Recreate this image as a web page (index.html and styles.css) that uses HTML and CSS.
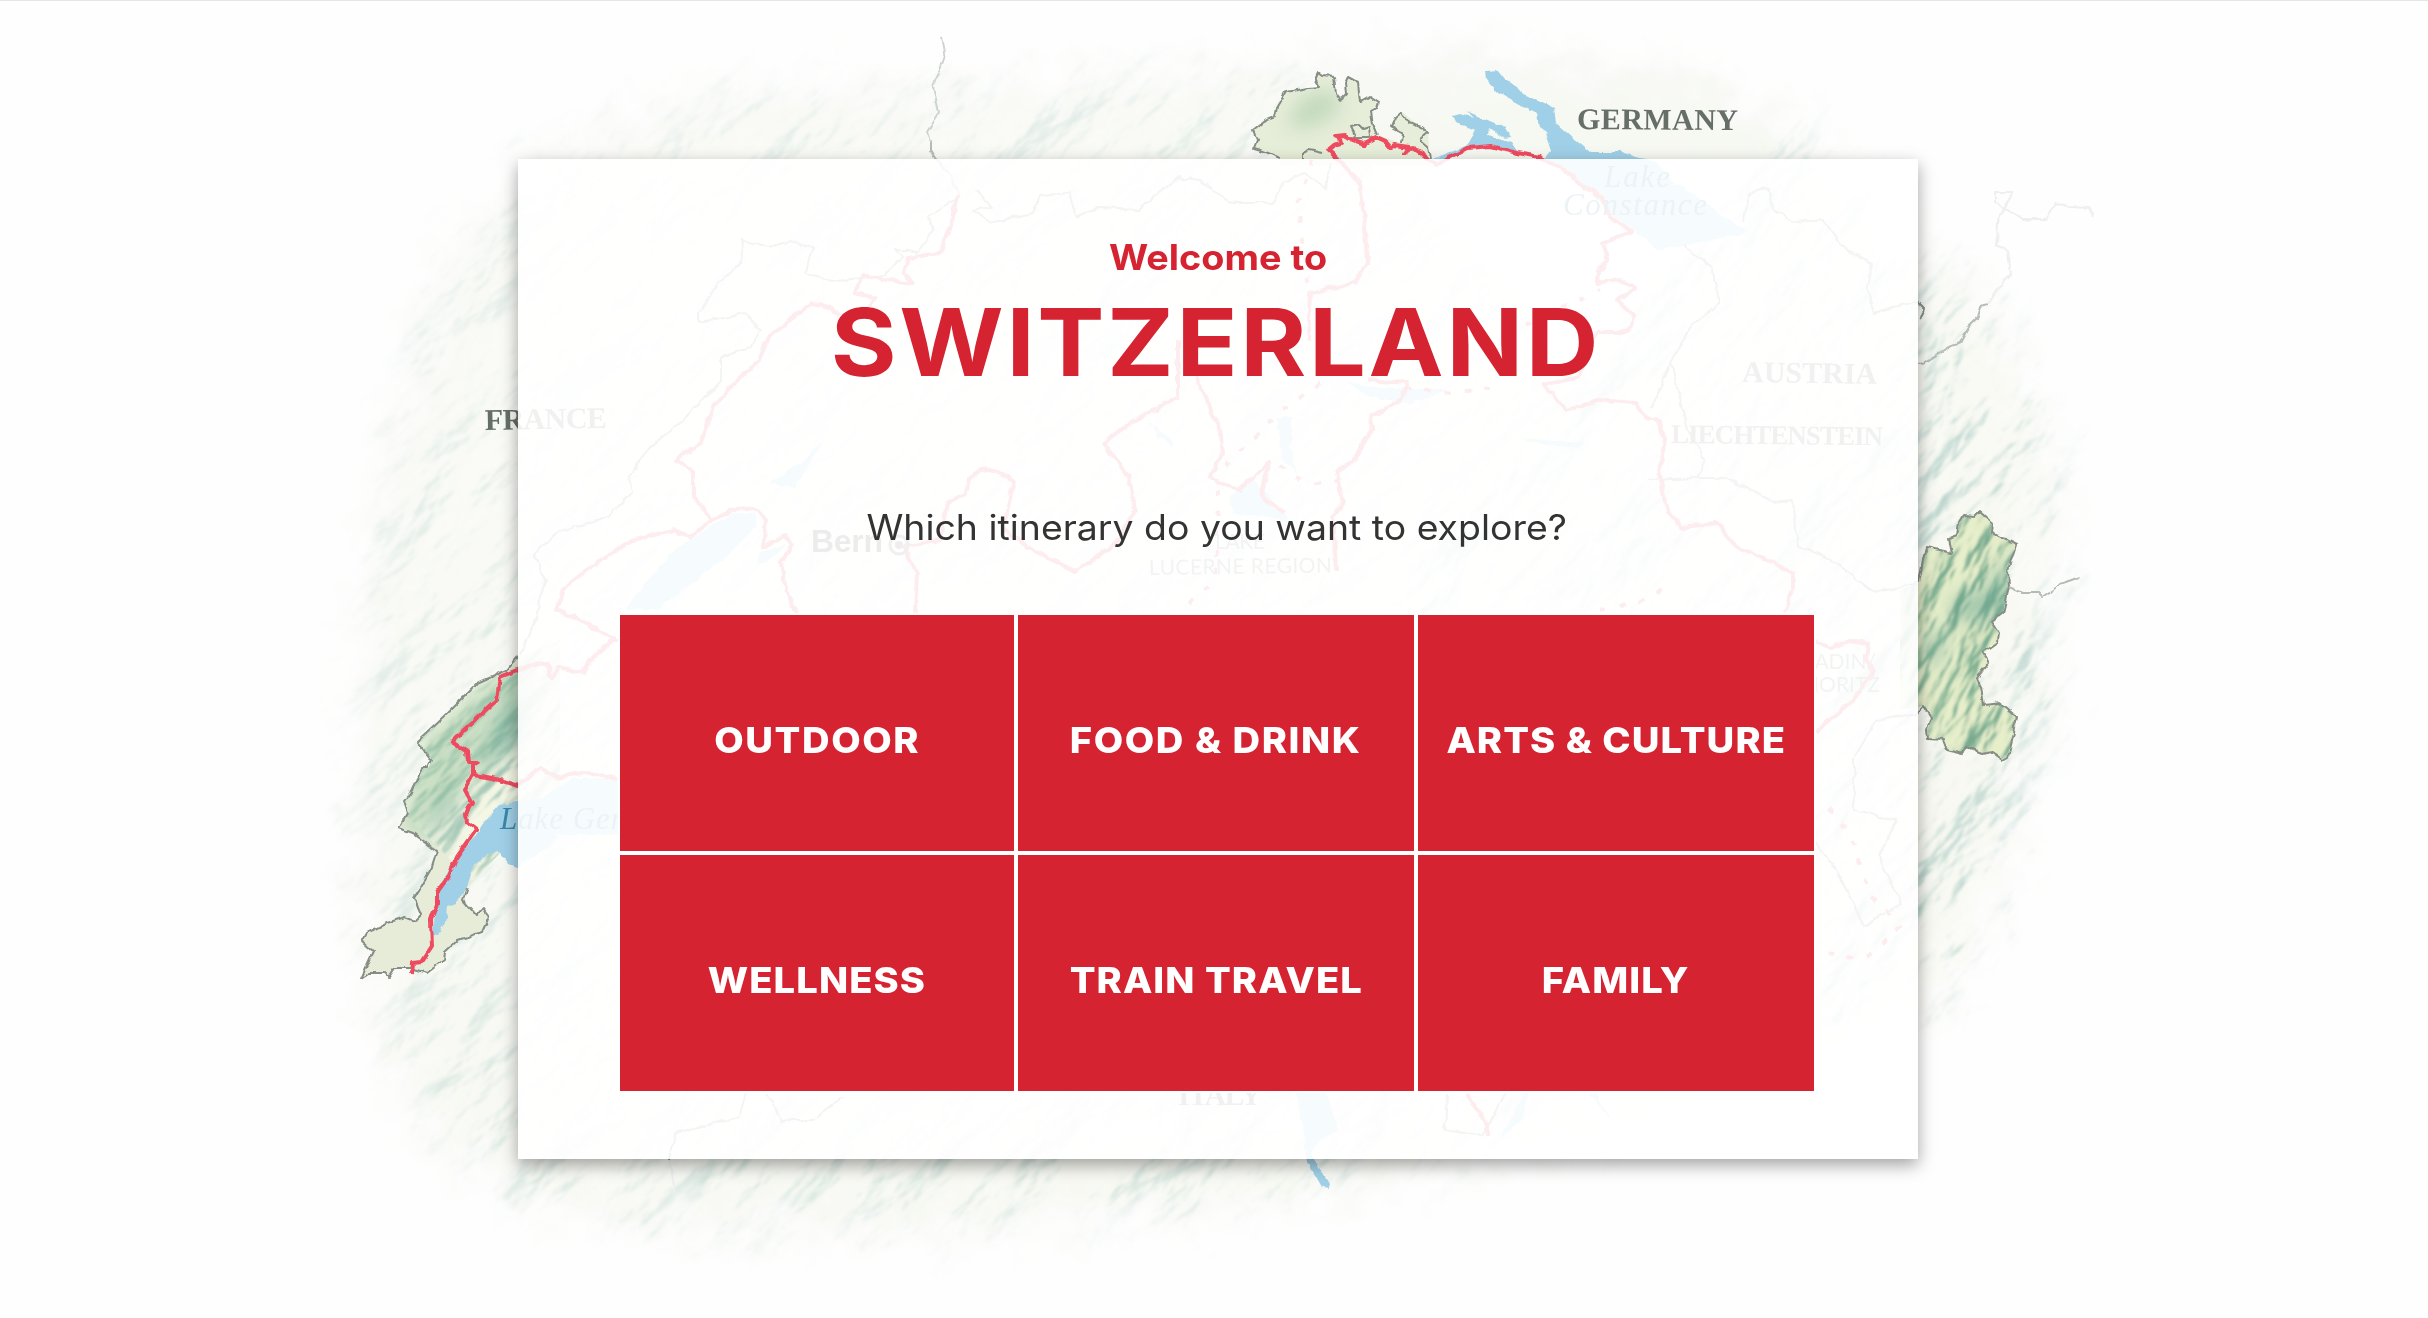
FILE: index.html
```html
<!DOCTYPE html>
<html lang="en">
<head>
<meta charset="utf-8">
<title>Welcome to Switzerland</title>
<link rel="stylesheet" href="styles.css">
</head>
<body>
<main class="stage">
  <svg class="map" viewBox="0 0 2428 1318" aria-hidden="true">
    <defs>
      <filter id="ragged" x="-10%" y="-10%" width="120%" height="120%">
        <feGaussianBlur stdDeviation="24" result="b"/>
        <feTurbulence type="fractalNoise" baseFrequency="0.03" numOctaves="4" seed="4" result="n"/>
        <feDisplacementMap in="b" in2="n" scale="70" xChannelSelector="R" yChannelSelector="G"/>
      </filter>
      <filter id="coast" filterUnits="userSpaceOnUse" x="0" y="0" width="2428" height="1318">
        <feTurbulence type="fractalNoise" baseFrequency="0.09" numOctaves="2" seed="7" result="n"/>
        <feDisplacementMap in="SourceGraphic" in2="n" scale="6" xChannelSelector="R" yChannelSelector="G"/>
      </filter>
      <filter id="relief" x="0" y="0" width="100%" height="100%" color-interpolation-filters="sRGB">
        <feTurbulence type="fractalNoise" baseFrequency="0.007 0.016" numOctaves="5" seed="11"/>
        <feDiffuseLighting surfaceScale="20" diffuseConstant="1.1" lighting-color="#fff">
          <feDistantLight azimuth="250" elevation="55"/>
        </feDiffuseLighting>
        <feComponentTransfer>
          <feFuncR type="table" tableValues=".6 .64 .72 .84 .95 .98"/>
          <feFuncG type="table" tableValues=".74 .78 .83 .9 .965 .98"/>
          <feFuncB type="table" tableValues=".7 .75 .8 .87 .93 .95"/>
        </feComponentTransfer>
        <feGaussianBlur stdDeviation="1.2"/>
      </filter>
      <filter id="crags" x="0" y="0" width="100%" height="100%" color-interpolation-filters="sRGB">
        <feTurbulence type="fractalNoise" baseFrequency="0.012 0.04" numOctaves="4" seed="23"/>
        <feDiffuseLighting surfaceScale="14" diffuseConstant="1.1" lighting-color="#fff">
          <feDistantLight azimuth="250" elevation="50"/>
        </feDiffuseLighting>
        <feComponentTransfer>
          <feFuncR type="table" tableValues=".5 .55 .62 .78 .93 1"/>
          <feFuncG type="table" tableValues=".7 .74 .78 .87 .95 1"/>
          <feFuncB type="table" tableValues=".64 .68 .72 .8 .88 .94"/>
        </feComponentTransfer>
        <feGaussianBlur stdDeviation=".8"/>
      </filter>
      <linearGradient id="fade" x1="0" y1="0" x2="1" y2="1">
        <stop offset="0" stop-color="#fff" stop-opacity=".45"/>
        <stop offset=".35" stop-color="#fff" stop-opacity=".6"/>
        <stop offset="1" stop-color="#fff"/>
      </linearGradient>
      <mask id="land" maskUnits="userSpaceOnUse" x="0" y="0" width="2428" height="1318">
        <path filter="url(#ragged)" fill="url(#fade)" d="M560 150 720 95 960 95 1250 75 1500 60 1680 80 1780 125 1890 240 1990 310 2040 440 2045 700 2000 850 1940 990 1830 1045 1600 1120 1380 1170 1200 1200 960 1220 700 1220 530 1200 435 1130 385 1030 365 900 368 640 395 450 440 270Z"/>
      </mask>
      <clipPath id="cantons">
        <path d="M518 657 507 670 478 683 443 718 417 742 432 760 428 768 422 768 410 793 403 802 407 813 399 828 413 833 437 851 432 867 419 890 414 898 421 915 415 921 405 917 387 923 367 933 362 942 373 952 368 963 361 979 370 973 385 973 389 977 395 968 410 968 427 973 444 960 445 952 458 940 482 932 489 917 483 909 477 916 463 900 467 888 500 853 560 830V640Z"/>
        <path d="M1919 583 1923 560 1926 547 1952 553 1949 538 1957 535 1959 522 1963 515 1975 516 1980 511 1993 523 1992 533 2016 545 2008 570 2009 587 2003 613 1992 622 1999 633 1998 642 1983 653 1989 663 1977 678 1981 687 1984 705 2000 703 2017 717 2013 737 2008 757 2003 760 1992 752 1983 754 1967 748 1962 754 1947 750 1943 740 1928 739 1927 730 1931 718 1923 706 1900 710V590Z"/>
        <path d="M1280 158 1261 150 1254 148 1257 140 1253 130 1263 122 1275 117 1277 107 1286 92 1309 88 1319 87 1315 80 1318 73 1334 77 1336 93 1341 100 1346 95 1348 77 1359 83 1361 102 1370 96 1379 102 1370 112 1377 135 1401 143 1402 133 1391 127 1402 112 1420 127 1428 133 1430 165 1280 165Z"/>
      </clipPath>
      <filter id="soft"><feGaussianBlur stdDeviation="9"/></filter>
    </defs>

    <g mask="url(#land)">
      <rect width="2428" height="1318" fill="#f1f4ea"/>
      <g opacity=".5"><rect x="-700" y="0" width="2300" height="1500" transform="rotate(-42 800 700)" filter="url(#relief)"/></g>
      <g opacity=".8"><rect x="1600" y="150" width="900" height="1000" transform="rotate(-48 1990 640)" filter="url(#relief)"/></g>
    </g>
    <g clip-path="url(#cantons)">
      <rect x="340" y="600" width="240" height="400" fill="#e6ecd8"/>
      <rect x="1240" y="60" width="200" height="110" fill="#e6edd8"/>
      <rect x="1880" y="500" width="150" height="280" fill="#e6eed8"/>
      <g opacity=".6"><rect x="340" y="500" width="240" height="340" transform="rotate(-45 460 700)" filter="url(#crags)"/></g>
      <g class="blend" opacity=".95"><rect x="1780" y="440" width="380" height="360" transform="rotate(-62 1970 640)" filter="url(#crags)"/></g>
      <g filter="url(#soft)">
        <path class="wood" d="M400 820 425 735 480 685 530 655 530 720 500 760 445 810 420 840Z"/>
        <path class="wood wood-dark" d="M520 680 525 740 480 770 490 740Z"/>
        <path class="wood wood-dark" d="M425 845 440 800 460 780 450 815Z"/>
        <path class="wood" d="M1285 125 1305 95 1335 90 1340 112 1310 128Z"/>
        <path class="wood wood-dark" d="M1950 600 1985 590 2010 550 2008 610 1960 625Z"/>
        <path class="wood wood-dark" d="M1920 650 1945 620 1940 670Z"/>
      </g>
    </g>

    <g filter="url(#coast)">
      <g class="lake">
        <path d="M518 802 500 805 482 825 475 837 453 863 437 892 433 935 438 936 445 923 447 907 455 905 467 887 473 868 487 854 500 853 507 863 517 867 547 848 557 835 620 835V778H573L543 797Z"/>
        <path d="M1486 70 1497 69 1506 80 1518 87 1523 95 1537 100 1554 108 1556 123 1573 138 1590 152 1621 152 1640 158 1655 160 1667 177 1701 200 1747 232 1720 238 1659 250 1636 232 1611 215 1583 183 1544 160 1552 150 1546 132 1539 127 1537 113 1518 103 1498 92 1487 80Z"/>
        <path d="M1453 115 1460 113 1475 118 1468 111 1483 118 1506 128 1512 137 1504 138 1489 128 1488 135 1512 142 1518 151 1491 145 1468 148 1449 160 1430 160 1468 145 1475 130 1456 122Z"/>
        <path d="M732 513H754L757 527 723 560 656 610H625L656 570 678 547Z"/>
        <path d="M824 440 795 487 768 485 803 460Z"/>
        <path d="M786 545 770 560 757 566 760 552Z"/>
        <path d="M1277 417H1293L1290 447 1298 473 1282 457Z"/>
        <path d="M1346 380 1368 387 1451 390 1411 403 1370 397Z"/>
        <path d="M1518 437 1582 442V448L1545 445Z"/>
        <path d="M1150 422 1172 440 1174 447 1158 436Z"/>
        <path d="M1228 497 1253 477 1277 507 1290 520 1234 513Z"/>
        <path d="M1297 1093H1326L1338 1130 1316 1142 1311 1154 1328 1183 1329 1188 1322 1187 1307 1161Z"/>
        <path d="M1524 1094H1530L1520 1122 1500 1138ZM1588 1093 1595 1095 1613 1120Z"/>
      </g>
      <g class="border">
        <path d="M518 657 507 670 478 683 443 718 417 742 432 760 428 768 422 768 410 793 403 802 407 813 399 828 413 833 437 851 432 867 419 890 414 898 421 915 415 921 405 917 387 923 367 933 362 942 373 952 368 963 361 979 370 973 385 973 389 977 395 968 410 968 427 973 444 960 445 952 458 940 482 932 489 917 483 909 477 916 463 900 467 888"/>
        <path d="M1919 583 1923 560 1926 547 1952 553 1949 538 1957 535 1959 522 1963 515 1975 516 1980 511 1993 523 1992 533 2016 545 2008 570 2009 587 2003 613 1992 622 1999 633 1998 642 1983 653 1989 663 1977 678 1981 687 1984 705 2000 703 2017 717 2013 737 2008 757 2003 760 1992 752 1983 754 1967 748 1962 754 1947 750 1943 740 1928 739 1927 730 1931 718 1923 706 1917 712"/>
        <path d="M1280 158 1261 150 1254 148 1257 140 1253 130 1263 122 1275 117 1277 107 1286 92 1309 88 1319 87 1315 80 1318 73 1322 76 1334 77 1336 93 1341 100 1346 95 1345 83 1348 77 1359 83 1361 102 1370 96 1379 102 1377 108 1370 112 1372 123 1377 135"/>
        <path d="M1351 127 1355 135 1351 138 1370 138 1369 127 1363 129 1359 125ZM1401 143 1402 133 1391 127 1395 118 1402 112 1409 122 1420 127 1428 133 1420 140 1428 147 1430 158M1303 160V153L1309 150 1322 153"/>
        <path d="M955 200 929 217 933 230 917 253 895 248 904 257 884 275 830 282 806 272 812 247 788 242 768 247 743 240 741 263 719 283 699 313V322L745 313 761 330 750 348 721 357V380L683 420 645 453 629 477 632 493 607 517 556 533 534 555 545 580 536 617 520 655"/>
        <path d="M975 190 991 207 973 210 991 223 1033 213 1040 195 1069 193 1076 217 1098 208 1138 210 1178 177 1200 180 1213 190 1231 203 1273 203 1282 185 1303 173 1326 188 1330 163"/>
        <path d="M1683 245 1712 267 1719 303 1690 327 1671 363 1652 407M1671 363 1688 430 1705 460 1697 478 1647 480M1697 478 1726 478 1774 502 1793 500 1798 547 1827 557 1874 593 1918 583M1743 222 1750 193 1769 188 1774 210 1793 222 1824 220 1846 250 1872 263 1867 287 1874 313 1918 302 1925 309 1920 318"/>
        <path d="M1917 713 1876 721 1854 758V810L1896 821 1879 857 1902 904 1864 926 1840 877 1816 841M746 1093 739 1117 675 1133 670 1160M767 1093 782 1120 813 1120 843 1097M1447 1093 1445 1130 1483 1136 1505 1094"/>
      </g>
      <g class="border border-thin">
        <path d="M930 140V150L935 158 951 177 959 195M2009 587 2023 593 2038 593 2042 597 2060 585 2080 578M1918 362 1923 364 1950 347 1960 343 1968 328 1978 318 1981 307 1987 305"/>
      </g>
      <g class="border border-faint">
        <path d="M942 37 945 53 933 87 939 113 927 133 930 142"/>
        <path class="ghost" d="M1987 305 1997 290 2011 275 2008 252 1997 245 1998 222 2004 208 1995 202V193H2013L2004 208 2023 220H2047L2055 202 2070 207 2089 208 2093 217M670 1160 675 1193"/>
      </g>
      <g class="route">
        <path d="M518 670 500 677 497 700 467 727 452 742 467 752 468 762 478 762 473 765V775L465 790 472 803 466 813 467 823 476 830 457 857 448 878 437 892V903L431 920 432 947 422 962 413 963 412 973"/>
        <path d="M473 775 493 778 518 786 540 768 557 777 590 772 617 779"/>
        <path d="M518 670 538 663 548 665 552 678 560 667 583 673 590 660 613 640 616 640 578 618 556 610 565 587 596 563 629 542 672 530 690 537 712 520"/>
        <path d="M1339 160 1328 150 1334 145 1342 143 1341 138 1336 136 1345 135 1353 140 1365 144 1376 138 1387 143 1391 148 1395 145 1409 147 1405 153 1412 147 1422 153 1426 159 1437 164 1451 157 1468 148 1491 146 1518 153 1539 157 1564 170 1583 185 1602 198 1609 217 1632 232 1602 243 1608 260 1598 270 1597 283 1621 280 1636 288 1616 300 1635 317 1628 332 1597 332 1578 377 1544 385 1566 410 1597 400 1635 403 1645 418 1659 420 1665 440 1659 470 1666 507 1681 527 1717 523 1736 547 1764 558 1793 573V587L1784 612"/>
        <path d="M1339 160 1360 183 1365 227 1367 263 1355 283 1310 293 1308 340M1816 641 1830 648 1849 641 1868 644 1866 659 1873 673 1854 699 1816 732M1467 1094 1488 1126V1136"/>
        <path d="M1368 380 1408 383 1400 400 1370 417 1373 427 1354 460 1336 473 1344 503 1333 517 1336 570"/>
        <path d="M1178 340V397L1132 422 1103 443 1129 477 1135 510 1116 543 1076 572 1030 548 1003 530 1014 480 985 468 969 480 966 493 947 503 940 540 904 547 917 573 915 613"/>
        <path d="M1194 373 1220 430 1223 453 1210 477 1239 490 1269 463 1261 497 1285 513"/>
        <path d="M958 195 953 217 940 253 908 258 904 273 913 283 888 280 862 275 855 293 875 298 870 307M839 317 830 307 812 303 768 337 759 360 737 380 714 407 701 443 676 460 694 473V497L712 520 732 510 754 507 766 520 763 547 786 535 792 545 781 563 786 590 797 613"/>
        <path class="dotted" d="M1320 383 1279 413 1258 435 1220 472M1313 160 1297 205 1303 240 1309 290M1405 388 1451 393 1490 388M1280 465 1305 483 1340 480M1829 808 1850 833 1859 861 1869 893 1891 916 1900 926 1879 948 1864 958 1816 952M1600 610 1640 602 1670 585M1525 325 1600 290M1218 490 1216 580 1180 612"/>
      </g>
    </g>

    <g class="country">
      <text x="1577" y="129" textLength="161" transform="rotate(.4 1577 129)">GERMANY</text>
      <text x="485" y="430" textLength="122" transform="rotate(-1 485 430)">FRANCE</text>
      <text x="1742" y="382" textLength="135" transform="rotate(.8 1742 382)">AUSTRIA</text>
      <text class="country-small" x="1671" y="443" textLength="212" transform="rotate(.6 1671 443)">LIECHTENSTEIN</text>
      <text x="1178" y="1105" textLength="84">ITALY</text>
    </g>
    <g class="water-name">
      <text x="500" y="829" textLength="172">Lake Geneva</text>
      <text x="1604" y="187" textLength="66">Lake</text>
      <text x="1563" y="215" textLength="144">Constance</text>
    </g>
    <g class="region">
      <text x="1215" y="549" textLength="50">LAKE</text>
      <text x="1149" y="575" textLength="183" transform="rotate(-.8 1149 575)">LUCERNE REGION</text>
      <text x="1876" y="669" text-anchor="end">ENGADIN/</text>
      <text x="1880" y="692" text-anchor="end">ST. MORITZ</text>
    </g>
    <text class="capital" x="811" y="552" textLength="72">Bern</text>
    <circle class="capital-mark" cx="899" cy="545" r="9"/>
    <circle cx="899" cy="545" r="4" fill="#555"/>
  </svg>

  <section class="card">
    <p class="welcome">Welcome to</p>
    <h1 class="title">SWITZERLAND</h1>
    <p class="question">Which itinerary do you want to explore?</p>
    <nav class="tiles">
      <a class="tile"><span class="label label-loose">OUTDOOR</span></a>
      <a class="tile"><span class="label label-loose">FOOD &amp; DRINK</span></a>
      <a class="tile"><span class="label">ARTS &amp; CULTURE</span></a>
      <a class="tile"><span class="label">WELLNESS</span></a>
      <a class="tile"><span class="label">TRAIN TRAVEL</span></a>
      <a class="tile"><span class="label">FAMILY</span></a>
    </nav>
  </section>
</main>
</body>
</html>
```
FILE: styles.css
```css
* { box-sizing: border-box; }

body {
  margin: 0;
  background: #fefefe;
  font-family: Inter, "Liberation Sans", sans-serif;
  color: #333;
}

.stage {
  position: relative;
  display: flex;
  justify-content: center;
  align-items: flex-start;
  width: 2428px;
  height: 1318px;
  padding: 158px 0 0 8px;
  border-top: 1px solid #e6e6e6;
  overflow: hidden;
}

.map {
  position: absolute;
  left: 0;
  top: -1px;
  width: 2428px;
  height: 1318px;
}

.blend { mix-blend-mode: multiply; }
.wood { fill: #8fbf98; opacity: .4; }
.wood-dark { fill: #5f9f90; opacity: .5; }
.lake { fill: #a0d0e7; }
.border { fill: none; stroke: #858d85; stroke-width: 2; stroke-linejoin: round; }
.border-thin { stroke: #b4bcb6; }
.border-faint { stroke: #cdd3ce; }
.ghost { stroke: #efefef; }
.route { fill: none; stroke: #ef4b61; stroke-width: 4; stroke-linejoin: round; }
.dotted { stroke-dasharray: 6 14; }

.country { font: bold 30px "Liberation Serif", serif; fill: #666e68; }
.country-small { font-size: 27px; }
.water-name { font: italic 31px "Liberation Serif", serif; fill: #3a86a8; }
.region { font: 21px Lato, sans-serif; fill: #7d8780; }
.capital { font: bold 32px "Liberation Sans", sans-serif; fill: #444; }
.capital-mark { fill: none; stroke: #666; stroke-width: 3; }

.card {
  position: relative;
  display: flex;
  flex-direction: column;
  align-items: center;
  width: 1400px;
  height: 1000px;
  padding-top: 75px;
  background: rgba(255, 255, 255, .9);
  box-shadow: 0 6px 16px rgba(0, 0, 0, .36);
}

.welcome, .title, .question { margin: 0; white-space: nowrap; }

.welcome {
  font-size: 35px;
  line-height: 46px;
  font-weight: 700;
  color: #d52331;
  transform: scaleX(1.08);
}

.title {
  margin: 12px 4px 0 0;
  font-size: 94px;
  line-height: 100px;
  font-weight: 700;
  letter-spacing: 2.5px;
  color: #d52331;
  transform: scaleX(1.07);
}

.question {
  margin: 112px 2px 0 0;
  font-size: 35px;
  line-height: 46px;
  transform: scaleX(1.069);
}

.tiles {
  display: grid;
  grid-template-columns: 398px 400px 400px;
  grid-auto-rows: 240px;
  align-self: flex-start;
  margin: 63px 0 0 100px;
}

.tile {
  display: flex;
  align-items: center;
  justify-content: center;
  padding-top: 13px;
  border: 2px solid #fff;
  background: #d52331;
  color: #fff;
  font-size: 36px;
  line-height: 48px;
  font-weight: 800;
}

.label {
  letter-spacing: 1px;
  transform: scaleX(1.06);
}

.label-loose { letter-spacing: 1.5px; }
```
